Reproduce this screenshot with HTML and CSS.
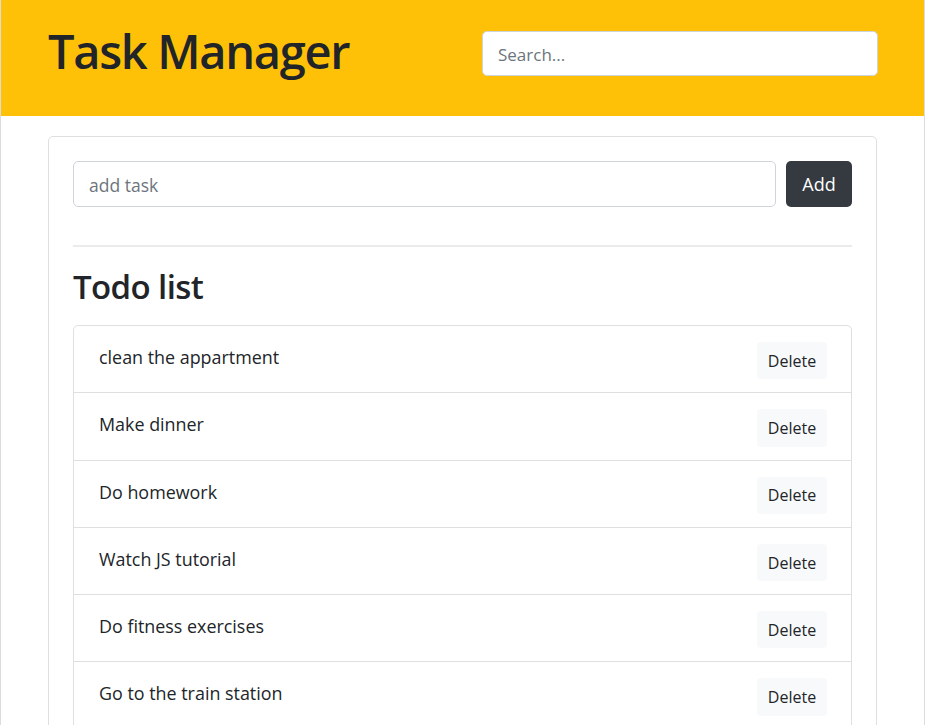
FILE: index.html
```html
<!DOCTYPE html>
<html lang="en">
<head>
<meta charset="utf-8">
<title>Task Manager</title>
<link rel="stylesheet" href="styles.css">
</head>
<body>
<div class="page">
  <header class="header">
    <h1 class="title">Task Manager</h1>
    <input class="search" type="text" placeholder="Search...">
  </header>
  <main class="card">
    <form class="add-form">
      <input class="add-input" type="text" placeholder="add task">
      <button class="btn-add" type="button">Add</button>
    </form>
    <hr class="divider">
    <h2 class="list-title">Todo list</h2>
    <ul class="list">
      <li class="item"><span class="item-text">clean the appartment</span><button class="btn-delete" type="button">Delete</button></li>
      <li class="item"><span class="item-text">Make dinner</span><button class="btn-delete" type="button">Delete</button></li>
      <li class="item"><span class="item-text">Do homework</span><button class="btn-delete" type="button">Delete</button></li>
      <li class="item"><span class="item-text">Watch JS tutorial</span><button class="btn-delete" type="button">Delete</button></li>
      <li class="item"><span class="item-text">Do fitness exercises</span><button class="btn-delete" type="button">Delete</button></li>
      <li class="item"><span class="item-text">Go to the train station</span><button class="btn-delete" type="button">Delete</button></li>
    </ul>
  </main>
</div>
</body>
</html>
```

FILE: styles.css
```css
* { box-sizing: border-box; }
html, body { margin: 0; padding: 0; }
body {
  font-family: "Open Sans", "Noto Sans", sans-serif;
  color: #212529;
  background: #fff;
}
.page {
  width: 925px;
  height: 725px;
  overflow: hidden;
  border-left: 1px solid #dcdcdc;
  border-right: 1px solid #dcdcdc;
}
.header {
  background: #ffc107;
  height: 116px;
  display: flex;
  justify-content: space-between;
  align-items: flex-start;
  padding: 0 46px 0 47px;
}
.title {
  margin: 19px 0 0;
  font-size: 47px;
  font-weight: 600;
  line-height: 64px;
  letter-spacing: -1.3px;
}
.search {
  margin-top: 31px;
  width: 396px;
  height: 45px;
  border: 1px solid #ced4da;
  border-radius: 5px;
  padding: 2px 15px 0;
  font-family: inherit;
  font-size: 17px;
  color: #495057;
  background: #fff;
  outline: none;
}
.search::placeholder, .add-input::placeholder { color: #6c757d; }
.card {
  margin: 20px 0 0 47px;
  width: 829px;
  border: 1px solid #dfdfdf;
  border-radius: 5px;
  padding: 24px 24px 0;
  min-height: 700px;
}
.add-form {
  display: flex;
  gap: 10px;
}
.add-input {
  flex: 1;
  height: 46px;
  border: 1px solid #ced4da;
  border-radius: 5px;
  padding: 2px 15px 0;
  font-family: inherit;
  font-size: 17.5px;
  color: #495057;
  outline: none;
}
.btn-add {
  width: 66px;
  height: 46px;
  border: none;
  border-radius: 5px;
  background: #343a40;
  color: #fff;
  font-family: inherit;
  font-size: 18px;
  padding: 0;
}
.divider {
  margin: 38px 0 0;
  border: 0;
  border-top: 2px solid #ebebeb;
}
.list-title {
  margin: 20px 0 0;
  font-size: 33px;
  font-weight: 600;
  line-height: 40px;
  letter-spacing: -0.6px;
}
.list {
  list-style: none;
  margin: 18px 0 0;
  padding: 0;
  border: 1px solid #dfdfdf;
  border-radius: 5px;
}
.item {
  display: flex;
  justify-content: space-between;
  align-items: flex-start;
  padding: 16px 24px 13px 25px;
  border-top: 1px solid #dfdfdf;
}
.item:first-child { border-top: none; }
.item-text {
  font-size: 17.9px;
  line-height: 30px;
}
.btn-delete {
  height: 37.3px;
  width: 70px;
  border: none;
  border-radius: 4px;
  background: #f8f9fa;
  color: #212529;
  font-family: inherit;
  font-size: 16px;
  padding: 0;
}
```
